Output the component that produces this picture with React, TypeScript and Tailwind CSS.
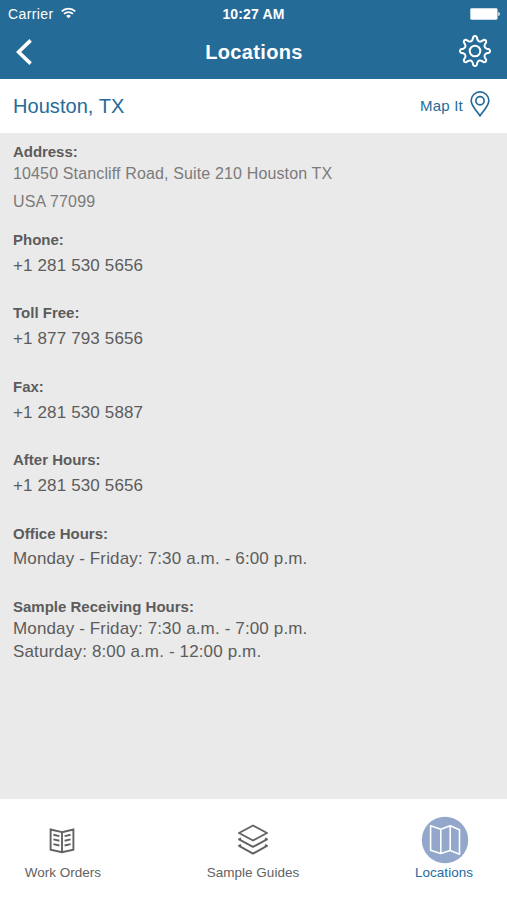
const contacts = [
  { label: 'Phone:', value: '+1 281 530 5656' },
  { label: 'Toll Free:', value: '+1 877 793 5656' },
  { label: 'Fax:', value: '+1 281 530 5887' },
  { label: 'After Hours:', value: '+1 281 530 5656' },
  { label: 'Office Hours:', value: 'Monday - Friday: 7:30 a.m. - 6:00 p.m.' },
];

// Outline of an eight-toothed gear centred on the origin.
const gearPath = (() => {
  const points: string[] = [];
  const at = (radius: number, degrees: number) => {
    const a = ((degrees - 90) * Math.PI) / 180;
    return `${(radius * Math.cos(a)).toFixed(2)} ${(radius * Math.sin(a)).toFixed(2)}`;
  };
  for (let i = 0; i < 8; i++) {
    const d = i * 45;
    points.push(`${i === 0 ? 'M' : 'L'}${at(14.2, d - 7)}`);
    points.push(`Q${at(16.1, d)} ${at(14.2, d + 7)}`);
    points.push(`L${at(12, d + 11)}`);
    points.push(`Q${at(9.2, d + 22.5)} ${at(12, d + 34)}`);
  }
  return points.join(' ') + 'Z';
})();

function StatusBar() {
  return (
    <div className="grid h-7 grid-cols-3 items-center pl-2 pr-[7px] text-white">
      <div className="flex items-center gap-[7px]">
        <span className="text-[14px] leading-5 tracking-[0.4px]">Carrier</span>
        <svg className="-mt-0.5" width="15" height="12" viewBox="0 0 15 12" fill="none" stroke="currentColor" strokeWidth="1.7">
          <path d="M.7 4.3a9.8 9.8 0 0 1 13.6 0" />
          <path d="M3 6.9a6.5 6.5 0 0 1 9 0" />
          <path d="M7.5 11.3 5.1 8.9a3.4 3.4 0 0 1 4.8 0z" fill="currentColor" stroke="none" />
        </svg>
      </div>
      <span className="pr-px text-center text-[14px] font-bold leading-5 tracking-[0.15px]">10:27 AM</span>
      <svg className="justify-self-end" width="30" height="12" viewBox="0 0 30 12" fill="currentColor">
        <rect x=".3" y=".3" width="27.2" height="11.4" rx="1.4" />
        <path d="M28.3 4c2 .7 2 3.3 0 4z" />
      </svg>
    </div>
  );
}

function Header() {
  return (
    <header className="h-[79px] bg-[#256b98]">
      <StatusBar />
      <div className="grid h-12 grid-cols-[1fr_auto_1fr] items-center pl-4 pr-[15px] text-white">
        <svg width="16" height="26" viewBox="0 0 16 26" fill="none" stroke="currentColor" strokeWidth="3.6">
          <path d="M14.6 1.4 2.6 13l12 11.6" />
        </svg>
        <h1 className="text-[20px] font-bold leading-6 tracking-[0.35px]">Locations</h1>
        <svg className="-mt-0.5 justify-self-end" width="34" height="34" viewBox="-17 -17 34 34" fill="none" stroke="currentColor" strokeWidth="2" strokeLinejoin="round">
          <path d={gearPath} />
          <circle r="5.3" />
        </svg>
      </div>
    </header>
  );
}

export default function App() {
  return (
    <div className="flex h-[900px] w-[507px] flex-col overflow-hidden bg-white font-['Liberation_Sans',Arial,sans-serif]">
      <Header />
      <div className="flex h-[54px] items-center justify-between pl-[13px] pr-[17px] text-[#256b98]">
        <h2 className="text-[20px] leading-6 tracking-[0.05px]">Houston, TX</h2>
        <div className="flex items-center gap-[7px]">
          <span className="text-[15px] leading-5 tracking-[0.2px]">Map It</span>
          <svg className="-mt-1" width="20" height="26" viewBox="0 0 20 26" fill="none" stroke="currentColor" strokeWidth="1.7">
            <path d="M10 24.7C6.7 19.7 1.2 14.8 1.2 9.7a8.8 8.8 0 0 1 17.6 0c0 5.1-5.5 10-8.8 15z" />
            <circle cx="10" cy="9.8" r="4.1" />
          </svg>
        </div>
      </div>
      <main className="h-[666px] bg-[#eaeaea] px-[13px] pt-[9px] text-[17px] leading-5 text-[#5c5c5c]">
        <section className="h-[88px] tracking-[0.14px]">
          <h3 className="text-[15px] font-bold leading-5 tracking-[-0.05px]">Address:</h3>
          <p className="pt-0.5 text-[16px] text-[#7b7b7b]">10450 Stancliff Road, Suite 210 Houston TX</p>
          <p className="pt-2 text-[16px] text-[#7b7b7b]">USA 77099</p>
        </section>
        {contacts.map(({ label, value }) => (
          <section key={label} className="h-[73.4px]">
            <h3 className="text-[15px] font-bold leading-5">{label}</h3>
            <p className="pt-[5.8px] tracking-[0.14px]">{value}</p>
          </section>
        ))}
        <section>
          <h3 className="text-[15px] font-bold leading-5">Sample Receiving Hours:</h3>
          <p className="pt-[2.5px] tracking-[0.14px]">Monday - Friday: 7:30 a.m. - 7:00 p.m.</p>
          <p className="pt-[3px] tracking-[0.14px]">Saturday: 8:00 a.m. - 12:00 p.m.</p>
        </section>
      </main>
      <nav className="grid h-[101px] grid-cols-[80px_1fr_64px] pl-[23px] pr-[31px] pt-[17px] text-[13.5px] leading-[17px] text-[#626262]">
        <div className="flex flex-col items-center">
          <div className="flex h-12 items-center pr-0.5 pt-0.5">
            <svg width="26" height="26" viewBox="0 0 26 26" fill="none" stroke="currentColor" strokeWidth="1.9">
              <path d="M13 4.2 1.6 1.5v20.2L13 24.3l11.4-2.6V1.5z" />
              <path d="M13 4.2v20" />
              <path d="m4.4 6.7 6 1.4m-6 3.3 6 1.4m-6 3.3 6 1.4M21.6 6.7l-6 1.4m6 3.3-6 1.4m6 3.3-6 1.4" />
            </svg>
          </div>
          <span className="whitespace-nowrap">Work Orders</span>
        </div>
        <div className="flex flex-col items-center pr-[9px]">
          <div className="flex h-12 items-center">
            <svg width="32" height="32" viewBox="0 0 32 32" fill="none" stroke="currentColor" strokeWidth="1.9" strokeLinejoin="round">
              <path d="M16 1.5 30 9l-14 7.5L2 9z" />
              <path d="m4 14.3-2 1.1 14 7.5 14-7.5-2-1.1" />
              <path d="m4 20.8-2 1.1 14 7.7 14-7.7-2-1.1" />
            </svg>
          </div>
          <span className="whitespace-nowrap">Sample Guides</span>
        </div>
        <div className="flex flex-col items-center text-[#256ba0]">
          <div className="flex h-12 items-center justify-center pl-0.5">
            <svg width="48" height="48" viewBox="0 0 48 48" fill="none" stroke="white" strokeWidth="1.6" strokeLinejoin="round">
              <circle cx="24" cy="24" r="23.2" fill="#93a7cb" stroke="none" />
              <path d="m9.6 9.8 10.2 3.5 9.4-3.5 9.3 4v24.4l-9.3-3.7-9.4 3-10.2-3.2zM19.8 13.3v24.2M29.2 9.8v24.7" />
            </svg>
          </div>
          <span className="tracking-[0.05px]">Locations</span>
        </div>
      </nav>
    </div>
  );
}
